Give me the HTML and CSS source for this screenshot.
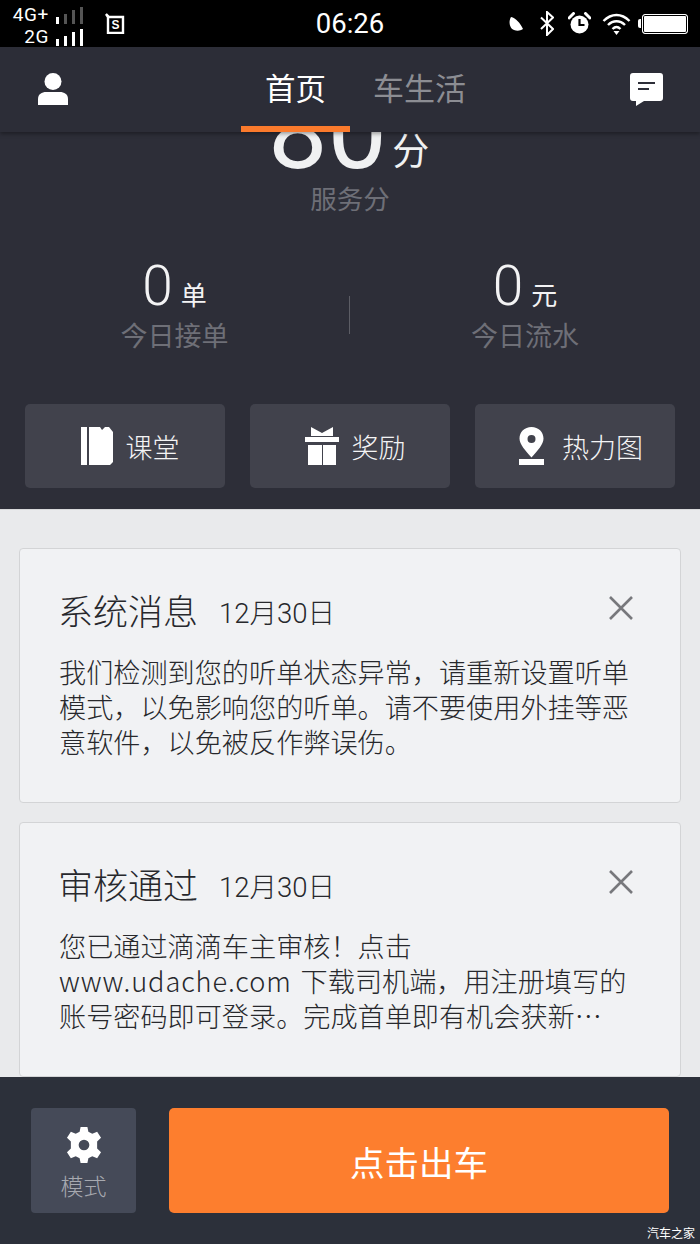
FILE: index.html
```html
<!DOCTYPE html>
<html lang="zh-CN">
<head>
<meta charset="utf-8">
<title>首页</title>
<link rel="stylesheet" href="styles.css">
</head>
<body>
<div class="app">
  <header class="status">
    <div class="net">
      <div class="net-row"><span>4G+</span>
        <svg class="bars" width="28" height="18" viewBox="0 0 28 18"><rect x="0" y="11" width="3" height="7" fill="#fff"/><rect x="8" y="8" width="3" height="10" fill="#555"/><rect x="16" y="4" width="3" height="14" fill="#555"/><rect x="24" y="1" width="3" height="17" fill="#555"/></svg>
      </div>
      <div class="net-row"><span>2G</span>
        <svg class="bars" width="28" height="18" viewBox="0 0 28 18"><rect x="0" y="11" width="3" height="7" fill="#fff"/><rect x="8" y="8" width="3" height="10" fill="#fff"/><rect x="16" y="4" width="3" height="14" fill="#fff"/><rect x="24" y="1" width="3" height="17" fill="#fff"/></svg>
      </div>
    </div>
    <svg class="sim" width="20" height="21" viewBox="0 0 20 21"><path d="M1 1l3 3h14v16H3V4z" fill="none" stroke="#fff" stroke-width="2.4"/><text x="10.5" y="16" font-size="12" font-weight="700" text-anchor="middle" fill="#fff" font-family="Liberation Sans">S</text></svg>
    <div class="clock">06:26</div>
    <div class="status-right">
      <svg class="si-moon" width="14" height="14" viewBox="0 0 14 14"><path d="M2 0c5 1 9 6 12 12-3 2-6 2-9 1C1 12-1 5 2 0z" fill="#fff"/></svg>
      <svg class="si-bt" width="14" height="25" viewBox="0 0 14 25"><path d="M1 6.500l12 11.500-6 6V1l6 5.500L1 18" fill="none" stroke="#fff" stroke-width="2"/></svg>
      <svg class="si-alarm" width="23" height="23" viewBox="0 0 23 23"><circle cx="11.500" cy="12.500" r="9" fill="#fff"/><path d="M11.500 7v6h5" fill="none" stroke="#000" stroke-width="2.200"/><path d="M1 6l4.500-4.500M22 6l-4.500-4.500" stroke="#fff" stroke-width="3" stroke-linecap="round"/></svg>
      <svg class="si-wifi" width="29" height="22" viewBox="0 0 29 22"><path d="M1.500 8c8-8 18-8 26 0M6 12c5-5 12-5 17 0M10.500 16c2.500-2.500 5.500-2.500 8 0" fill="none" stroke="#fff" stroke-width="2.400"/><path d="M11.500 18h6l-3 4z" fill="#fff"/></svg>
      <div class="battery"><span class="battery-tip"></span><span class="battery-body"></span></div>
    </div>
  </header>

  <nav class="nav">
    <svg class="nav-icon" width="32" height="32" viewBox="0 0 32 32"><circle cx="16" cy="8.500" r="8.500" fill="#fff"/><path d="M1 32v-6c0-5 4-7 8-7h14c4 0 8 2 8 7v6z" fill="#fff"/></svg>
    <div class="tabs">
      <div class="tab tab-on">首页</div>
      <div class="tab">车生活</div>
    </div>
    <svg class="nav-icon" width="33" height="33" viewBox="0 0 33 33"><path d="M3 0h27a3 3 0 0 1 3 3v22a3 3 0 0 1-3 3H14l-8 5v-5H3a3 3 0 0 1-3-3V3a3 3 0 0 1 3-3z" fill="#fff"/><path d="M8 10h17M8 16h11" stroke="#2d2e38" stroke-width="2.200"/></svg>
  </nav>

  <section class="hero">
    <div class="score"><span class="score-num">80</span><span class="score-unit">分</span></div>
    <div class="score-label">服务分</div>
    <div class="stats">
      <div class="stat">
        <div class="stat-value"><span class="stat-num">0</span><span class="stat-unit">单</span></div>
        <div class="stat-label">今日接单</div>
      </div>
      <div class="divider"></div>
      <div class="stat">
        <div class="stat-value"><span class="stat-num">0</span><span class="stat-unit">元</span></div>
        <div class="stat-label">今日流水</div>
      </div>
    </div>
    <div class="actions">
      <div class="action">
        <svg width="32" height="38" viewBox="0 0 32 38"><rect x="0" y="0" width="6" height="38" fill="#fff"/><path d="M8 0h11l2 3 3-3h4l4 5v30l-3 3H8z" fill="#fff"/></svg>
        <span>课堂</span>
      </div>
      <div class="action">
        <svg width="34" height="38" viewBox="0 0 34 38"><path d="M6 0l11 6 11-6v9H6z" fill="#fff"/><rect x="0" y="10" width="34" height="5" fill="#fff"/><rect x="3" y="18" width="14" height="20" fill="#fff"/><rect x="18" y="18" width="13" height="20" fill="#fff"/></svg>
        <span>奖励</span>
      </div>
      <div class="action action-map">
        <svg width="25" height="38" viewBox="0 0 25 38"><path fill-rule="evenodd" d="M12.500 0c7 0 12 5 12 11.500 0 6-6 12-12 19C6.500 23.500.5 17.500.5 11.500.5 5 5.500 0 12.500 0zm0 8a4 4 0 1 0 0 8 4 4 0 0 0 0-8z" fill="#fff"/><rect x="0" y="32" width="25" height="6" fill="#fff"/></svg>
        <span>热力图</span>
      </div>
    </div>
  </section>

  <main class="feed">
    <article class="card">
      <div class="card-head">
        <h2>系统消息</h2><time>12月30日</time>
        <svg class="close" width="26" height="26" viewBox="0 0 26 26"><path d="M2 2l22 22M24 2L2 24" stroke="#77787c" stroke-width="2.600"/></svg>
      </div>
      <p>我们检测到您的听单状态异常，请重新设置听单模式，以免影响您的听单。请不要使用外挂等恶意软件，以免被反作弊误伤。</p>
    </article>
    <article class="card">
      <div class="card-head">
        <h2>审核通过</h2><time>12月30日</time>
        <svg class="close" width="26" height="26" viewBox="0 0 26 26"><path d="M2 2l22 22M24 2L2 24" stroke="#77787c" stroke-width="2.600"/></svg>
      </div>
      <p>您已通过滴滴车主审核！点击<br><span class="latin">www.udache.com</span> 下载司机端，用注册填写的<br>账号密码即可登录。完成首单即有机会获新⋯</p>
    </article>
  </main>

  <footer class="footer">
    <div class="mode">
      <svg width="36" height="36" viewBox="0 0 37 37"><path fill-rule="evenodd" fill="#fff" d="M15 0h7l1 5 4 2 5-2 4 6-4 4v7l4 4-4 6-5-2-4 2-1 5h-7l-1-5-4-2-5 2-4-6 4-4v-7L1 11l4-6 5 2 4-2zm3.500 13a5.500 5.500 0 1 0 0 11 5.500 5.500 0 0 0 0-11z"/></svg>
      <span>模式</span>
    </div>
    <div class="go">点击出车</div>
    <div class="mark">汽车之家</div>
  </footer>
</div>
</body>
</html>
```
FILE: styles.css
```css
* { box-sizing: border-box; }
html, body { margin: 0; padding: 0; }
body { font-family: "Roboto", "Noto Sans CJK SC", sans-serif; background: #2c303a; }
.app { width: 700px; height: 1244px; display: flex; flex-direction: column; overflow: hidden; }

.status { height: 47px; background: #000; color: #fff; display: flex; align-items: center; padding: 0 12px 0 12px; position: relative; flex: none; }
.net { width: 72px; display: flex; flex-direction: column; font-size: 19px; line-height: 22px; margin-top: 5px; letter-spacing: .6px; }
.net-row { display: flex; justify-content: flex-end; align-items: center; gap: 7px; }
.net-row .bars { flex: none; }
.sim { margin-left: 21px; margin-top: -1px; }
.clock { position: absolute; left: 0; right: 0; top: 8px; text-align: center; font-size: 27.500px; line-height: 32px; }
.status-right { margin-left: auto; display: flex; align-items: center; }
.si-bt { margin-left: 17px; }
.si-alarm { margin-left: 14px; }
.si-wifi { margin-left: 11px; }
.battery { display: flex; align-items: center; margin-left: 7px; }
.battery-tip { width: 3px; height: 9px; background: #fff; border-radius: 2px 0 0 2px; }
.battery-body { width: 46px; height: 20px; background: #fff; border: 1px solid #fff; border-radius: 3px; box-shadow: inset 0 0 0 1px #000; margin-left: 1px; }

.nav { height: 85px; background: #2c2d37; display: flex; align-items: flex-start; justify-content: space-between; padding: 26px 37px 0; box-shadow: 0 2px 4px rgba(0,0,0,.35); position: relative; z-index: 2; flex: none; }
.tabs { position: absolute; left: 241px; top: 0; height: 85px; display: flex; }
.tab { font-size: 31px; line-height: 36px; padding-top: 22px; color: #8c8d93; font-family: "Noto Sans CJK SC", sans-serif; margin-left: 23px; }
.tab-on { width: 109px; margin-left: 0; padding-left: 24px; font-size: 30.500px; color: #fff; border-bottom: 6px solid #fb7a2c; }

.hero { height: 377px; background: #2d2e38; flex: none; overflow: hidden; display: flex; flex-direction: column; align-items: center; }
.score { height: 36px; width: 100%; display: flex; align-items: flex-end; padding-left: 268px; color: #f0f1f2; }
.score-num { font-size: 106px; line-height: 100px; font-weight: 400; margin-bottom: -14px; flex: none; }
.score-unit { font-size: 37px; line-height: 36px; font-family: "Noto Sans CJK SC", sans-serif; margin-left: 5px; margin-bottom: 1px; }
.score-label { margin-top: 11px; font-size: 26.500px; line-height: 38px; color: #6e6f77; font-family: "Noto Sans CJK SC", sans-serif; }
.stats { margin-top: 40px; display: grid; grid-template-columns: 349px 1px 350px; width: 100%; align-items: center; }
.stat { display: flex; flex-direction: column; align-items: center; }
.stat-value { display: flex; align-items: baseline; color: #f3f3f4; height: 58px; }
.stat-num { font-size: 55px; line-height: 58px; font-weight: 300; }
.stat-unit { font-size: 26px; margin-left: 8px; font-family: "Noto Sans CJK SC", sans-serif; line-height: 58px; }
.stat-label { font-size: 27px; line-height: 38px; color: #6e6f77; font-family: "Noto Sans CJK SC", sans-serif; margin-top: 1px; }
.divider { width: 1px; height: 38px; background: #5c5d65; margin-top: 18px; }
.actions { margin-top: 50px; display: grid; grid-template-columns: repeat(3, 200px); gap: 25px; }
.action { height: 84px; padding-left: 10px; background: #41424c; border-radius: 5px; display: flex; align-items: center; justify-content: center; gap: 13px; color: #f4f4f5; font-size: 27px; font-family: "Noto Sans CJK SC", sans-serif; font-weight: 300; }
.action-map { gap: 18px; padding-left: 12px; }

.feed { height: 568px; background: #e9eaec; border-top: 1px solid #d8d9db; padding: 38px 19px 0; overflow: hidden; flex: none; display: flex; flex-direction: column; gap: 19px; font-family: "Noto Sans CJK SC", sans-serif; }
.card { flex: none; height: 255px; background: #f1f2f4; border: 1px solid #d3d4d6; border-radius: 4px; padding: 36px 39px 0; color: #27282c; }
.card-head { display: flex; align-items: center; height: 50px; position: relative; }
.card-head h2 { margin: 0 0 0 -1px; font-size: 35px; line-height: 50px; font-weight: 300; }
.card-head time { margin-left: 21px; margin-top: 2px; font-size: 27.500px; font-family: "Roboto", "Noto Sans CJK SC", sans-serif; font-weight: 300; }
.close { margin-left: auto; margin-right: 7px; margin-top: -4px; }
.card p { margin: 19px 0 0; font-size: 27.150px; line-height: 35px; width: 575px; font-weight: 300; }
.latin { letter-spacing: .9px; margin-right: 3px; }

.footer { flex: 1; background: #2c303a; display: flex; gap: 33px; padding: 31px 31px 0; position: relative; z-index: 2; align-items: flex-start; font-family: "Noto Sans CJK SC", sans-serif; }
.mode { width: 105px; height: 105px; background: #454a58; border-radius: 4px; display: flex; flex-direction: column; align-items: center; padding-top: 19px; color: #a7a9b0; font-size: 23px; line-height: 32px; gap: 6px; flex: none; font-weight: 300; }
.go { width: 500px; height: 105px; background: #fd7e2e; border-radius: 5px; color: #fff; font-size: 34.500px; display: flex; align-items: center; justify-content: center; }
.mark { position: absolute; right: 5px; bottom: 3px; font-size: 12px; line-height: 16px; color: #fff; }
```
